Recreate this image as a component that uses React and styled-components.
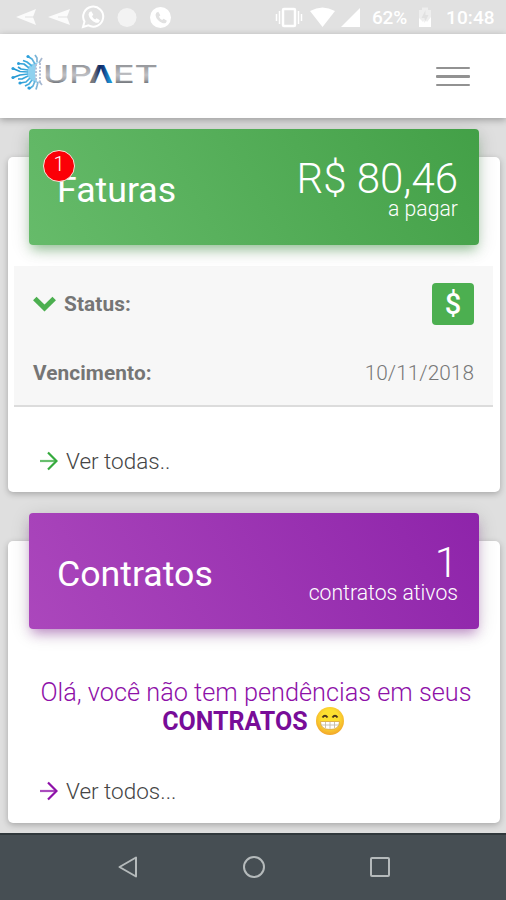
import React from 'react'
import styled, { createGlobalStyle, css } from 'styled-components'

const GlobalStyle = createGlobalStyle`
  * {
    box-sizing: border-box;
  }

  body {
    margin: 0;
    background: #dfdfdf;
    font-family: Roboto, 'Liberation Sans', sans-serif;
    font-weight: 300;
  }
`

const themes = {
  green: {
    main: '#4caf50',
    gradient: 'linear-gradient(60deg, #66bb6a, #43a047)',
    shadow: '0 4px 20px rgba(0, 0, 0, 0.14), 0 7px 12px -3px rgba(76, 175, 80, 0.5)'
  },
  purple: {
    main: '#8e10a8',
    gradient: 'linear-gradient(60deg, #ab47bc, #8e24aa)',
    shadow: '0 4px 20px rgba(0, 0, 0, 0.14), 0 7px 12px -3px rgba(156, 39, 176, 0.45)'
  }
}

const Screen = styled.div`
  display: flex;
  flex-direction: column;
  width: 506px;
  height: 900px;
  overflow: hidden;
`

const StatusBar = styled.div`
  display: flex;
  justify-content: space-between;
  flex: none;
  height: 34px;
  background: #e1e1e1;
  color: #fff;
`

const Notifications = styled.svg`
  width: 180px;
  height: 34px;
`

const SystemStatus = styled.div`
  display: flex;
  align-items: center;
  padding: 2px 11px 0 0;
  font-size: 19px;
  font-weight: 500;
  line-height: 34px;
`

const SignalIcons = styled.svg`
  width: 88px;
  height: 34px;
  margin: -2px 9px 0 -2px;
`

const BatteryIcon = styled.svg`
  width: 14px;
  height: 34px;
  margin: -2px 14px 0 10px;
`

const Percent = styled.span`
  width: 36px;
  letter-spacing: -0.2px;
`

const Clock = styled.span`
  width: 49px;
  letter-spacing: 0.1px;
`

const Header = styled.header`
  position: relative;
  display: flex;
  justify-content: space-between;
  align-items: center;
  flex: none;
  height: 84px;
  padding: 0 36px 0 8px;
  background: #fff;
  box-shadow: 0 2px 7px rgba(0, 0, 0, 0.3);
`

const Logo = styled.svg`
  width: 154px;
  height: 44px;
  margin-top: -8px;
`

const MenuButton = styled.button`
  display: flex;
  flex-direction: column;
  gap: 6px;
  width: 34px;
  margin-top: 1px;
  padding: 0;
  border: 0;
  background: none;
`

const MenuBar = styled.span`
  height: 2.5px;
  border-radius: 1px;
  background: #929292;
`

const Content = styled.main`
  display: flex;
  flex-direction: column;
  gap: 49px;
  flex: 1;
  padding: 39px 6px 0 8px;
`

const CardWrapper = styled.section`
  display: flex;
  flex-direction: column;
  flex: none;
  height: ${({ $height }) => $height}px;
  padding: 0 7px 0 6px;
  border-radius: 5px;
  background: #fff;
  box-shadow: 0 2px 6px rgba(0, 0, 0, 0.25);
`

const CardHeader = styled.div(({ $tone }) => {
  const { gradient, shadow } = themes[$tone]
  return css`
    position: relative;
    display: flex;
    justify-content: space-between;
    align-items: center;
    flex: none;
    height: 116px;
    margin: -28px 14px 0 15px;
    padding: 0 21px 0 28px;
    border-radius: 4px;
    background: ${gradient};
    box-shadow: ${shadow};
    color: #fff;
  `
})

const Title = styled.h2`
  margin: 6px 0 0;
  font-size: 35.7px;
  font-weight: 400;
  line-height: 42px;
`

const Badge = styled.span`
  position: absolute;
  top: 21px;
  left: 14px;
  width: 32px;
  height: 32px;
  border: 1.5px solid #f5e9dc;
  border-radius: 50%;
  background: #fb0007;
  font-size: 20px;
  line-height: 27px;
  text-align: center;
`

const Summary = styled.div`
  display: flex;
  flex-direction: column;
  align-items: flex-end;
  margin-top: 4px;
`

const Amount = styled.span`
  font-size: 42px;
  line-height: 40px;
`

const Caption = styled.span`
  font-size: 21.2px;
  line-height: 20px;
`

const Details = styled.div`
  height: 141px;
  margin-top: 21px;
  padding: 17px 19px 0 19px;
  border-bottom: 2px solid #dcdcdc;
  background: #f7f7f7;
  color: #757575;
`

const DetailRow = styled.div`
  display: flex;
  justify-content: space-between;
  align-items: center;
  height: ${({ $height }) => $height}px;
  font-size: 20.8px;
`

const Label = styled.span`
  display: flex;
  align-items: center;
  gap: 8px;
  font-weight: 700;
  letter-spacing: 0.1px;
`

const DateText = styled.span`
  color: #777;
  font-size: 20.8px;
  letter-spacing: 0.05px;
`

const PayButton = styled.button`
  width: 42px;
  height: 42px;
  padding: 0;
  border: 0;
  border-radius: 4px;
  background: #4caf50;
  color: #fff;
  font: 500 29px/42px Roboto, sans-serif;
`

const Message = styled.p`
  margin: 49px 0 0;
  color: ${themes.purple.main};
  font-size: 25.3px;
  line-height: 29px;
  text-align: center;
  text-indent: 5px;
  white-space: nowrap;
`

const Strong = styled.strong`
  font-weight: 700;
  font-size: 25px;
  color: #780c98;
`

const Emoji = styled.svg`
  width: 30px;
  height: 30px;
  margin: -4px 0 0 1px;
  vertical-align: -6px;
`

const CardLink = styled.a`
  display: flex;
  align-items: center;
  gap: 8px;
  margin: auto 0 ${({ $bottom }) => $bottom}px 25px;
  color: #444;
  font-size: 22.5px;
  line-height: 30px;
`

const NavBar = styled.nav`
  position: relative;
  display: flex;
  align-items: center;
  justify-content: center;
  gap: 102px;
  flex: none;
  height: 67px;
  padding: 0 0 2px 2px;
  border-top: 2px solid #30383c;
  background: #464e53;
`

const NavIcon = styled.svg`
  width: 24px;
  height: 24px;
  fill: none;
  stroke: #b5babb;
  stroke-width: 2;
`

const Arrow = ({ color }) => (
  <svg width="19" height="20" viewBox="0 0 19 20" fill="none" stroke={color} strokeWidth="2.2">
    <path d="M1 10h16" opacity="0.75" />
    <path d="M9 1.5l8.5 8.5L9 18.5" />
  </svg>
)

const Chevron = () => (
  <svg width="23" height="16" viewBox="0 0 23 16" fill="none" stroke="#4caf50" strokeWidth="5">
    <path d="M1.8 2.5l9.7 9.5 9.7-9.5" />
  </svg>
)

const PHONE = 'M-4.2-4.8l2-1 2 3.5-1.3 1.5q1 2.2 3.1 3.2l1.5-1.2 3.3 2-1 2q-1 1-3 .5Q-4.2 2.900-5-2.500z'

const StatusIcons = () => (
  <Notifications viewBox="0 0 180 34">
    <g fill="#fff">
      <path d="M16 17L36 9l-3 8 3 8z" opacity="0.85" />
      <path d="M48 17L70 9l-3 8 3 8z" opacity="0.85" />
      <path d={PHONE} transform="translate(93.5 17)" />
      <circle cx="127" cy="17.5" r="9.5" opacity="0.6" />
      <circle cx="160.5" cy="17.5" r="10.5" />
    </g>
    <path d="M36 17H25M70 17H58" stroke="#e1e1e1" />
    <path d="M83 27l1.5-5.500a10 10 0 1 1 4 3.900z" fill="none" stroke="#fff" strokeWidth="2" />
    <path d={PHONE} transform="translate(160.5 17.5)" fill="#e1e1e1" />
  </Notifications>
)

// rays of the logo burst, drawn from the core to the tip
const rays = [
  'M27 14L24 9L20 6.5', 'M29 12L29 8L27 5', 'M24 16L19 12L15 10.500', 'M21 18L16 14L10 13.500',
  'M20 20L13 19L10 17', 'M20 22L12 21.500L5 18.500', 'M20 24L12 25L4 28', 'M20 26L14 29L10 29',
  'M22 28L18 32L12 33', 'M24 30L21 34L17 36', 'M27 31L25 36L21 39', 'M30 32L29 36L28 39.500',
  'M31 13L34 8', 'M31 31L34 35'
]

const BrandLogo = () => (
  <Logo viewBox="0 0 154 44" role="img" aria-label="UPNET">
    <defs>
      <linearGradient id="metal" gradientUnits="userSpaceOnUse" x1="0" y1="16" x2="0" y2="34">
        <stop offset="0" stopColor="#989a9e" />
        <stop offset="0.5" stopColor="#bfc0c4" />
        <stop offset="0.75" stopColor="#a5a7ab" />
        <stop offset="1" stopColor="#666a70" />
      </linearGradient>
      <linearGradient id="peak" x1="0" y1="0" x2="1" y2="0">
        <stop offset="0.2" stopColor="#77797e" />
        <stop offset="0.45" stopColor="#10275f" />
        <stop offset="0.6" stopColor="#123f86" />
        <stop offset="0.85" stopColor="#1c8ed0" />
      </linearGradient>
      <linearGradient id="burst" gradientUnits="userSpaceOnUse" x1="4" y1="0" x2="34" y2="0">
        <stop offset="0" stopColor="#168fcc" />
        <stop offset="0.6" stopColor="#45afe0" />
        <stop offset="1" stopColor="#aeb9cf" />
      </linearGradient>
    </defs>
    <g fill="none" stroke="url(#burst)" strokeWidth="1.7" strokeLinejoin="round">
      {rays.map(d => <path key={d} d={d} />)}
    </g>
    <g fill="#2d9fda">
      <circle cx="5" cy="18.5" r="1.6" />
      <circle cx="5" cy="27.5" r="1.6" />
      <circle cx="12" cy="33" r="1.6" />
      <circle cx="20" cy="6.5" r="1.6" />
      <circle cx="21" cy="38" r="1.6" />
      <circle cx="10.5" cy="13.5" r="1.5" />
    </g>
    <path d="M30 12q-11 2-11 10.500T30 33q-6-9 0-21z" fill="#55b8e6" opacity="0.65" />
    <path d="M28 14v18M32 13v19" stroke="#b3bfd8" strokeWidth="2" strokeDasharray="2 1.5" />
    <g fontFamily="Inter, sans-serif" fontSize="24" fontWeight="500" fill="url(#metal)">
      <text x="35" y="33" textLength="49" lengthAdjust="spacingAndGlyphs">UP</text>
      <text x="81" y="33" textLength="24" lengthAdjust="spacingAndGlyphs" fill="url(#peak)" fontWeight="700">Λ</text>
      <text x="105" y="33" textLength="45" lengthAdjust="spacingAndGlyphs">ET</text>
    </g>
  </Logo>
)

const Grin = () => (
  <Emoji viewBox="0 0 30 30" role="img" aria-label="😁">
    <defs>
      <radialGradient id="face" cx="0.5" cy="0.4" r="0.6">
        <stop offset="0.5" stopColor="#fde030" />
        <stop offset="1" stopColor="#f2a52b" />
      </radialGradient>
    </defs>
    <circle cx="15" cy="15" r="14" fill="url(#face)" />
    <path d="M7.5 11.500q2.500-3.500 5 0M17.500 11.500q2.500-3.500 5 0" fill="none" stroke="#49351c" strokeWidth="2" />
    <path d="M5.5 15.500h19q0 8-9.500 8t-9.500-8z" fill="#fff" stroke="#d9a33b" strokeWidth="0.8" />
    <path d="M6 19h18M10.500 16v6M15 16v7M19.500 16v6" fill="none" stroke="#c3bba8" strokeWidth="0.9" />
  </Emoji>
)

const App = () => (
  <Screen>
    <GlobalStyle />
    <StatusBar>
      <StatusIcons />
      <SystemStatus>
        <SignalIcons viewBox="0 0 88 34" fill="#fff">
          <rect x="8" y="9" width="12" height="17" rx="1" fill="none" stroke="#fff" strokeWidth="2.5" />
          <path d="M4.500 11v13M1.500 14v7M23.500 11v13M26.500 14v7" stroke="#fff" strokeWidth="1.5" />
          <path d="M35 11q12.500-7 25 0L47.500 27z" />
          <path d="M85 8v19H66z" />
        </SignalIcons>
        <Percent>62%</Percent>
        <BatteryIcon viewBox="0 0 14 34">
          <path d="M1 10h3V7.500h6V10h3v17H1z" fill="#fff" opacity="0.45" />
          <path d="M1 18l4 4 2-3 2 3 4-5v10H1z" fill="#fff" />
          <path d="M7.500 10L3.500 18h3v5l4-8h-3z" fill="#e1e1e1" />
        </BatteryIcon>
        <Clock>10:48</Clock>
      </SystemStatus>
    </StatusBar>
    <Header>
      <BrandLogo />
      <MenuButton aria-label="Menu">
        <MenuBar />
        <MenuBar />
        <MenuBar />
      </MenuButton>
    </Header>
    <Content>
      <CardWrapper $height={335}>
        <CardHeader $tone="green">
          <Title>Faturas</Title>
          <Badge>1</Badge>
          <Summary>
            <Amount>R$ 80,46</Amount>
            <Caption>a pagar</Caption>
          </Summary>
        </CardHeader>
        <Details>
          <DetailRow $height={42}>
            <Label><Chevron />Status:</Label>
            <PayButton>$</PayButton>
          </DetailRow>
          <DetailRow $height={96}>
            <Label>Vencimento:</Label>
            <DateText>10/11/2018</DateText>
          </DetailRow>
        </Details>
        <CardLink $bottom={16}>
          <Arrow color="#35aa3d" />
          Ver todas..
        </CardLink>
      </CardWrapper>
      <CardWrapper $height={282}>
        <CardHeader $tone="purple">
          <Title>Contratos</Title>
          <Summary>
            <Amount>1</Amount>
            <Caption>contratos ativos</Caption>
          </Summary>
        </CardHeader>
        <Message>
          Olá, você não tem pendências em seus<br />
          <Strong>CONTRATOS</Strong> <Grin />
        </Message>
        <CardLink $bottom={17}>
          <Arrow color={themes.purple.main} />
          Ver todos...
        </CardLink>
      </CardWrapper>
    </Content>
    <NavBar>
      <NavIcon viewBox="0 0 24 24"><path d="M20 2.500v19L3.500 12z" strokeLinejoin="round" /></NavIcon>
      <NavIcon viewBox="0 0 24 24"><circle cx="12" cy="12" r="10" /></NavIcon>
      <NavIcon viewBox="0 0 24 24"><rect x="3" y="3" width="18" height="18" rx="1" /></NavIcon>
    </NavBar>
  </Screen>
)

export default App
